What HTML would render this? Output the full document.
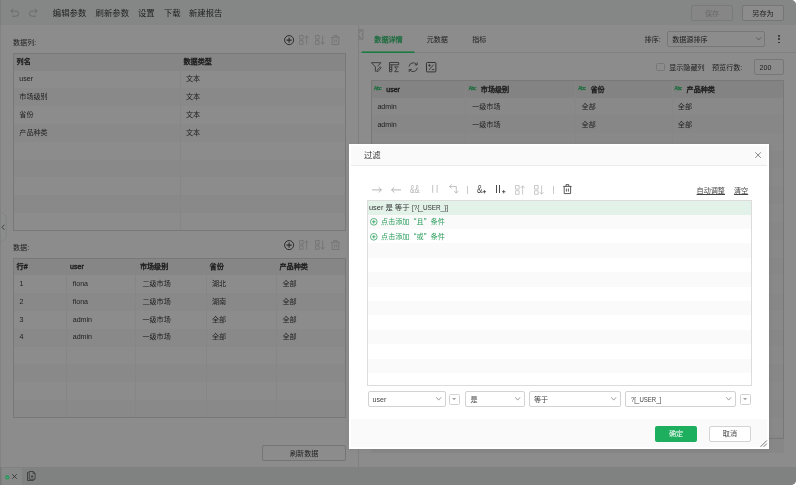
<!DOCTYPE html><html lang="zh-CN"><head><meta charset="utf-8"><title>过滤</title><style>
*{box-sizing:border-box;margin:0;padding:0}
html,body{width:796px;height:485px;overflow:hidden;background:#fff}
body{font-family:"Liberation Sans","Noto Sans CJK SC",sans-serif;font-size:7.1px;color:#1e1e1e;position:relative}
.a{position:absolute}
.t{position:absolute;white-space:nowrap;line-height:10px;height:10px}
.b{font-weight:normal;-webkit-text-stroke:0.4px currentColor}
.f14{font-size:8.4px}
svg{position:absolute;overflow:visible}
.btn{position:absolute;border:1px solid #757575;border-radius:2px;text-align:center;line-height:15.4px;height:15px}
</style></head><body><div class="a" style="left:0;top:0;width:796px;height:485px;border-radius:0 5px 5px 0;overflow:hidden;background:#8c8c8c;will-change:transform">
<div class="a" style="left:0px;top:0px;width:796px;height:25px;background:#858786"></div>
<div class="a" style="left:0px;top:25px;width:796px;height:442px;background:#8c8c8c"></div>
<div class="t f14" style="left:52.8px;top:8.00px;">编辑参数</div>
<div class="t f14" style="left:95.6px;top:8.00px;">刷新参数</div>
<div class="t f14" style="left:138px;top:8.00px;">设置</div>
<div class="t f14" style="left:164px;top:8.00px;">下载</div>
<div class="t f14" style="left:189px;top:8.00px;">新建报告</div>
<svg class="a" style="left:10px;top:7.7px" width="10" height="9" viewBox="0 0 10 9"><path d="M3.2 0.8 L0.8 3 L3.2 5.2 M0.8 3 H6 A2.6 2.6 0 0 1 6 8.2 H2" fill="none" stroke="#696969" stroke-width="0.95"/></svg>
<svg class="a" style="left:28.2px;top:7.7px" width="10" height="9" viewBox="0 0 10 9"><path d="M6.8 0.8 L9.2 3 L6.8 5.2 M9.2 3 H4 A2.6 2.6 0 0 0 4 8.2 H8" fill="none" stroke="#696969" stroke-width="0.95"/></svg>
<div class="btn" style="left:691px;top:5px;width:42px;height:15.6px;line-height:16.4px;color:#6a6a6a;background:#868686;border-color:#7a7a7a">保存</div>
<div class="btn" style="left:742px;top:5px;width:42px;height:15.6px;line-height:16.4px;background:#8c8c8c">另存为</div>
<div class="t " style="left:13px;top:38.00px;">数据列:</div>
<svg style="left:283.9px;top:35.199999999999996px" width="10.2" height="10.2" viewBox="0 0 10.2 10.2"><circle cx="5.1" cy="5.1" r="4.55" fill="none" stroke="#2c2c2c" stroke-width="1"/><path d="M5.1 2.5V7.7M2.5 5.1H7.7" stroke="#2c2c2c" stroke-width="1.1"/></svg>
<svg style="left:298.9px;top:35.4px" width="10" height="10" viewBox="0 0 10 10"><path d="M0.5 0.5h3.6v3.6h-3.6zM0.5 5.7h3.6v3.6h-3.6z M7.6 9.6V0.8 M5.6 2.9 L7.6 0.8 L9.6 2.9" fill="none" stroke="#747474" stroke-width="0.9"/></svg>
<svg style="left:314.7px;top:35.4px" width="10" height="10" viewBox="0 0 10 10"><path d="M0.5 0.5h3.6v3.6h-3.6zM0.5 5.7h3.6v3.6h-3.6z M7.6 0.4V9.2 M5.6 7.1 L7.6 9.2 L9.6 7.1" fill="none" stroke="#747474" stroke-width="0.9"/></svg>
<svg style="left:331.4px;top:35.3px" width="8.9" height="10" viewBox="0 0 8.9 10"><path d="M0.2 2.3H8.7 M2.9 2.3V0.6H6V2.3 M1.1 2.3V9.5H7.8V2.3 M3.5 4.4V7.4 M5.4 4.4V7.4" fill="none" stroke="#747474" stroke-width="0.9"/></svg>
<div class="a" style="left:13px;top:52.8px;width:333px;height:178.0px;background:#8c8c8c"></div>
<div class="a" style="left:13px;top:52.8px;width:333px;height:17.8px;background:#868686"></div>
<div class="a" style="left:13px;top:88.4px;width:333px;height:17.8px;background:#898989"></div>
<div class="a" style="left:13px;top:124.0px;width:333px;height:17.8px;background:#898989"></div>
<div class="a" style="left:13px;top:159.6px;width:333px;height:17.8px;background:#898989"></div>
<div class="a" style="left:13px;top:195.2px;width:333px;height:17.8px;background:#898989"></div>
<div class="a" style="left:180px;top:53.3px;width:0.6px;height:177.0px;background:#868686"></div>
<div class="a" style="left:13px;top:52.8px;width:333px;height:178.0px;border:1px solid #787878"></div>
<div class="t b" style="left:16.6px;top:56.70px;color:#1f1f1f">列名</div>
<div class="t b" style="left:183.5px;top:56.70px;color:#1f1f1f">数据类型</div>
<div class="t " style="left:19.3px;top:74.20px;">user</div>
<div class="t " style="left:186px;top:74.20px;">文本</div>
<div class="t " style="left:19.3px;top:92.00px;">市场级别</div>
<div class="t " style="left:186px;top:92.00px;">文本</div>
<div class="t " style="left:19.3px;top:109.80px;">省份</div>
<div class="t " style="left:186px;top:109.80px;">文本</div>
<div class="t " style="left:19.3px;top:127.60px;">产品种类</div>
<div class="t " style="left:186px;top:127.60px;">文本</div>
<div class="t " style="left:13px;top:242.90px;">数据:</div>
<svg style="left:283.9px;top:239.9px" width="10.2" height="10.2" viewBox="0 0 10.2 10.2"><circle cx="5.1" cy="5.1" r="4.55" fill="none" stroke="#2c2c2c" stroke-width="1"/><path d="M5.1 2.5V7.7M2.5 5.1H7.7" stroke="#2c2c2c" stroke-width="1.1"/></svg>
<svg style="left:298.9px;top:240.1px" width="10" height="10" viewBox="0 0 10 10"><path d="M0.5 0.5h3.6v3.6h-3.6zM0.5 5.7h3.6v3.6h-3.6z M7.6 9.6V0.8 M5.6 2.9 L7.6 0.8 L9.6 2.9" fill="none" stroke="#747474" stroke-width="0.9"/></svg>
<svg style="left:314.7px;top:240.1px" width="10" height="10" viewBox="0 0 10 10"><path d="M0.5 0.5h3.6v3.6h-3.6zM0.5 5.7h3.6v3.6h-3.6z M7.6 0.4V9.2 M5.6 7.1 L7.6 9.2 L9.6 7.1" fill="none" stroke="#747474" stroke-width="0.9"/></svg>
<svg style="left:331.4px;top:240px" width="8.9" height="10" viewBox="0 0 8.9 10"><path d="M0.2 2.3H8.7 M2.9 2.3V0.6H6V2.3 M1.1 2.3V9.5H7.8V2.3 M3.5 4.4V7.4 M5.4 4.4V7.4" fill="none" stroke="#747474" stroke-width="0.9"/></svg>
<div class="a" style="left:13px;top:257.6px;width:333px;height:160.20000000000002px;background:#8c8c8c"></div>
<div class="a" style="left:13px;top:257.6px;width:333px;height:17.8px;background:#868686"></div>
<div class="a" style="left:13px;top:293.2px;width:333px;height:17.8px;background:#898989"></div>
<div class="a" style="left:13px;top:328.8px;width:333px;height:17.8px;background:#898989"></div>
<div class="a" style="left:13px;top:364.4px;width:333px;height:17.8px;background:#898989"></div>
<div class="a" style="left:13px;top:400.0px;width:333px;height:17.8px;background:#898989"></div>
<div class="a" style="left:66.4px;top:258.1px;width:0.6px;height:159.20000000000002px;background:#868686"></div>
<div class="a" style="left:135.3px;top:258.1px;width:0.6px;height:159.20000000000002px;background:#868686"></div>
<div class="a" style="left:206.3px;top:258.1px;width:0.6px;height:159.20000000000002px;background:#868686"></div>
<div class="a" style="left:276.2px;top:258.1px;width:0.6px;height:159.20000000000002px;background:#868686"></div>
<div class="a" style="left:13px;top:257.6px;width:333px;height:160.20000000000002px;border:1px solid #787878"></div>
<div class="t b" style="left:16.6px;top:261.50px;color:#1f1f1f">行#</div>
<div class="t b" style="left:70px;top:261.50px;color:#1f1f1f">user</div>
<div class="t b" style="left:139.9px;top:261.50px;color:#1f1f1f">市场级别</div>
<div class="t b" style="left:209.6px;top:261.50px;color:#1f1f1f">省份</div>
<div class="t b" style="left:279.5px;top:261.50px;color:#1f1f1f">产品种类</div>
<div class="t " style="left:19.6px;top:279.00px;">1</div>
<div class="t " style="left:72.7px;top:279.00px;">fiona</div>
<div class="t " style="left:142.4px;top:279.00px;">二级市场</div>
<div class="t " style="left:212px;top:279.00px;">湖北</div>
<div class="t " style="left:282.5px;top:279.00px;">全部</div>
<div class="t " style="left:19.6px;top:296.80px;">2</div>
<div class="t " style="left:72.7px;top:296.80px;">fiona</div>
<div class="t " style="left:142.4px;top:296.80px;">二级市场</div>
<div class="t " style="left:212px;top:296.80px;">湖南</div>
<div class="t " style="left:282.5px;top:296.80px;">全部</div>
<div class="t " style="left:19.6px;top:314.60px;">3</div>
<div class="t " style="left:72.7px;top:314.60px;">admin</div>
<div class="t " style="left:142.4px;top:314.60px;">一级市场</div>
<div class="t " style="left:212px;top:314.60px;">全部</div>
<div class="t " style="left:282.5px;top:314.60px;">全部</div>
<div class="t " style="left:19.6px;top:332.40px;">4</div>
<div class="t " style="left:72.7px;top:332.40px;">admin</div>
<div class="t " style="left:142.4px;top:332.40px;">一级市场</div>
<div class="t " style="left:212px;top:332.40px;">全部</div>
<div class="t " style="left:282.5px;top:332.40px;">全部</div>
<div class="btn" style="left:262.4px;top:445.3px;width:83.5px;height:15.3px;line-height:16.8px">刷新数据</div>
<svg style="left:0;top:211px" width="8" height="32" viewBox="0 0 8 32"><path d="M0.6 0.3 C1.5 2.2 6.2 3 6.2 5.5 V26.5 C6.2 29 1.5 29.8 0.6 31.7" fill="#8a8d8b" stroke="#7e7e7e" stroke-width="0.6"/><path d="M4.3 13.8 L2 16.3 L4.3 18.8" fill="none" stroke="#3a3a3a" stroke-width="0.9"/></svg>
<div class="a" style="left:358.2px;top:24.5px;width:0.7px;height:442px;background:#808080"></div>
<svg style="left:358.3px;top:28.8px" width="6" height="11" viewBox="0 0 6 11"><rect x="0" y="0" width="5.6" height="10.9" fill="#7d7d7d"/><path d="M3.9 2.9 L1.7 5.45 L3.9 8" fill="none" stroke="#a0a0a0" stroke-width="0.9"/></svg>
<div class="t b" style="left:374.3px;top:34.60px;color:#166a3a;-webkit-text-stroke-width:0.25px">数据详情</div>
<div class="t " style="left:426.7px;top:34.60px;">元数据</div>
<div class="t " style="left:472.2px;top:34.60px;">指标</div>
<div class="a" style="left:359px;top:52px;width:437px;height:0.6px;background:#818181"></div>
<svg style="left:361px;top:50px" width="54" height="4" viewBox="0 0 54 4"><rect x="0.8" y="1.45" width="52.7" height="1.5" fill="#167a3c"/></svg>
<div class="t " style="left:644.6px;top:35.10px;">排序:</div>
<div class="a" style="left:667.2px;top:31.4px;width:97.8px;height:15.6px;border:1px solid #777;border-radius:2px;background:#8c8c8c"></div>
<div class="t " style="left:672.2px;top:35.10px;">数据源排序</div>
<svg style="left:755.6px;top:37.2px" width="5.4" height="3.4" viewBox="0 0 5.4 3.4"><path d="M0.3 0.4 L2.7 2.9 L5.1 0.4" fill="none" stroke="#444" stroke-width="0.7"/></svg>
<div class="a" style="left:778.2px;top:35.099999999999994px;width:1.5px;height:1.5px;background:#2a2a2a;border-radius:1px"></div>
<div class="a" style="left:778.2px;top:38.3px;width:1.5px;height:1.5px;background:#2a2a2a;border-radius:1px"></div>
<div class="a" style="left:778.2px;top:41.5px;width:1.5px;height:1.5px;background:#2a2a2a;border-radius:1px"></div>
<svg style="left:370.8px;top:61.8px" width="10.4" height="10.4" viewBox="0 0 10.4 10.4"><path d="M0.5 0.7H9.9L6.6 4.3 M0.5 0.7L4.4 4.9V9.6" fill="none" stroke="#353535" stroke-width="0.9"/><path d="M9.3 4.7L6.1 8.2L5.8 9.7L7.2 9.3L10.2 5.8Z" fill="none" stroke="#353535" stroke-width="0.8"/></svg>
<svg style="left:389.2px;top:62px" width="10.2" height="10.2" viewBox="0 0 10.2 10.2"><path d="M0.5 0.5H9.7V2.8H0.5Z M0.5 2.8V9.7H2.8V2.8 M0.5 5.2H2.8 M0.5 7.5H2.8" fill="none" stroke="#353535" stroke-width="0.9"/><path d="M9.6 4.9H5.7L7.8 7.3L5.7 9.7H9.6" fill="none" stroke="#353535" stroke-width="0.9"/></svg>
<svg style="left:407.8px;top:61.8px" width="10.4" height="10.4" viewBox="0 0 10.4 10.4"><path d="M1 4.5A4.3 4.3 0 0 1 8.6 2.4 M9.2 0.5V2.9H6.8 M9.4 5.9A4.3 4.3 0 0 1 1.8 8 M1.2 9.9V7.5H3.6" fill="none" stroke="#353535" stroke-width="0.9"/></svg>
<svg style="left:426.3px;top:61.8px" width="10.4" height="10.4" viewBox="0 0 10.4 10.4"><rect x="0.5" y="0.5" width="9.4" height="9.4" rx="0.8" fill="none" stroke="#353535" stroke-width="1"/><path d="M2.2 3.4H4.8 M3.5 2.1V4.7 M7.6 2.6L3 8 M5.9 7.6H8.4" fill="none" stroke="#353535" stroke-width="0.85"/></svg>
<div class="a" style="left:656.2px;top:62.6px;width:8.6px;height:8.6px;border:1px solid #777;border-radius:1.5px;background:#8c8c8c"></div>
<div class="t " style="left:669.2px;top:62.80px;">显示隐藏列</div>
<div class="t " style="left:712px;top:62.80px;">预览行数:</div>
<div class="a" style="left:754px;top:59.4px;width:29.7px;height:15.6px;border:1px solid #777;border-radius:2px;background:#8c8c8c"></div>
<div class="t " style="left:759.5px;top:62.80px;">200</div>
<div class="a" style="left:371px;top:80px;width:412.7px;height:359px;background:#898989"></div>
<div class="a" style="left:371px;top:80px;width:412.7px;height:17.5px;background:#838383"></div>
<div class="a" style="left:371px;top:115.0px;width:412.7px;height:17.8px;background:#878787"></div>
<div class="a" style="left:371px;top:150.6px;width:412.7px;height:17.8px;background:#878787"></div>
<div class="a" style="left:371px;top:186.2px;width:412.7px;height:17.8px;background:#878787"></div>
<div class="a" style="left:371px;top:221.8px;width:412.7px;height:17.8px;background:#878787"></div>
<div class="a" style="left:371px;top:257.4px;width:412.7px;height:17.8px;background:#878787"></div>
<div class="a" style="left:371px;top:293.0px;width:412.7px;height:17.8px;background:#878787"></div>
<div class="a" style="left:371px;top:328.6px;width:412.7px;height:17.8px;background:#878787"></div>
<div class="a" style="left:371px;top:364.2px;width:412.7px;height:17.8px;background:#878787"></div>
<div class="a" style="left:371px;top:399.8px;width:412.7px;height:17.8px;background:#878787"></div>
<div class="a" style="left:371px;top:435.4px;width:412.7px;height:17.8px;background:#878787"></div>
<div class="a" style="left:465.4px;top:80.5px;width:0.6px;height:358px;background:#868686"></div>
<div class="a" style="left:575.3px;top:80.5px;width:0.6px;height:358px;background:#868686"></div>
<div class="a" style="left:671.5px;top:80.5px;width:0.6px;height:358px;background:#868686"></div>
<div class="a" style="left:371px;top:80px;width:412.7px;height:359px;border:1px solid #787878"></div>
<div class="t b" style="left:374.10px;top:83.50px;font-size:4.7px;color:#156c38;letter-spacing:-0.25px;-webkit-text-stroke-width:0.25px;margin-top:0.5px">Abc</div>
<div class="t b" style="left:386.2px;top:85.00px;color:#1f1f1f">user</div>
<div class="t b" style="left:468.70px;top:83.50px;font-size:4.7px;color:#156c38;letter-spacing:-0.25px;-webkit-text-stroke-width:0.25px;margin-top:0.5px">Abc</div>
<div class="t b" style="left:480.8px;top:85.00px;color:#1f1f1f">市场级别</div>
<div class="t b" style="left:578.30px;top:83.50px;font-size:4.7px;color:#156c38;letter-spacing:-0.25px;-webkit-text-stroke-width:0.25px;margin-top:0.5px">Abc</div>
<div class="t b" style="left:590.4px;top:85.00px;color:#1f1f1f">省份</div>
<div class="t b" style="left:674.50px;top:83.50px;font-size:4.7px;color:#156c38;letter-spacing:-0.25px;-webkit-text-stroke-width:0.25px;margin-top:0.5px">Abc</div>
<div class="t b" style="left:686.6px;top:85.00px;color:#1f1f1f">产品种类</div>
<div class="t " style="left:377.4px;top:102.10px;">admin</div>
<div class="t " style="left:472.2px;top:102.10px;">一级市场</div>
<div class="t " style="left:581.6px;top:102.10px;">全部</div>
<div class="t " style="left:677.8px;top:102.10px;">全部</div>
<div class="t " style="left:377.4px;top:119.90px;">admin</div>
<div class="t " style="left:472.2px;top:119.90px;">一级市场</div>
<div class="t " style="left:581.6px;top:119.90px;">全部</div>
<div class="t " style="left:677.8px;top:119.90px;">全部</div>
<div class="a" style="left:0px;top:466.6px;width:796px;height:18.4px;background:#808281"></div>
<div class="a" style="left:2px;top:468px;width:19.8px;height:17px;background:#868988;border-radius:0 0 0 2px"></div>
<svg style="left:5px;top:475.2px" width="4.6" height="4.8" viewBox="0 0 4.6 4.8"><circle cx="2.3" cy="2.4" r="2.15" fill="#2b955c"/><path d="M1.2 2.5H3.4" stroke="#6fbf96" stroke-width="0.6"/></svg>
<svg style="left:12px;top:474.2px" width="5" height="5" viewBox="0 0 5 5"><path d="M0.3 0.3L4.7 4.7M4.7 0.3L0.3 4.7" stroke="#2c2c2c" stroke-width="0.8"/></svg>
<svg style="left:27px;top:471px" width="8.6" height="10" viewBox="0 0 8.6 10"><path d="M1.6 1.4H0.5V9.5H6.4V8.4 M2.2 0.5H6.2L8.1 2.4V8.2H2.2Z M6.1 0.6V2.5H8 M3.8 5.4H6.4 M5.1 4.1V6.7" fill="none" stroke="#333" stroke-width="0.8"/></svg>
<div class="a" style="left:349px;top:144.4px;width:420px;height:304.5px;background:#fff;box-shadow:0 1px 5px rgba(0,0,0,0.05);color:#3d3d3d">
<div class="a" style="left:1.6px;top:1.6px;width:416.8px;height:20px;background:#fafafa;border-bottom:1px solid #ebebeb"></div>
<div class="t f14" style="left:15px;top:5.90px;color:#333">过滤</div>
<svg style="left:406.00px;top:7.80px" width="6.2" height="6.2" viewBox="0 0 6.2 6.2"><path d="M0.3 0.3L5.9 5.9M5.9 0.3L0.3 5.9" stroke="#555" stroke-width="0.7"/></svg>
<svg style="left:23.00px;top:42.50px" width="10" height="5.8" viewBox="0 0 10 5.8"><path d="M0 2.9H9.4 M6.7 0.3L9.4 2.9L6.7 5.5" fill="none" stroke="#a8a8a8" stroke-width="0.85"/></svg>
<svg style="left:41.80px;top:42.50px" width="10" height="5.8" viewBox="0 0 10 5.8"><path d="M10 2.9H0.6 M3.3 0.3L0.6 2.9L3.3 5.5" fill="none" stroke="#a8a8a8" stroke-width="0.85"/></svg>
<svg style="left:61.40px;top:41.00px" width="10" height="8" viewBox="0 0 10 8"><text x="0" y="7.6" font-size="10.6" fill="#b8b8b8" textLength="9.7" lengthAdjust="spacingAndGlyphs" font-family="Liberation Sans, sans-serif">&amp;&amp;</text></svg>
<svg style="left:82.60px;top:41.00px" width="6" height="8" viewBox="0 0 6 8"><path d="M0.7 0V7.8M5.1 0V7.8" stroke="#b8b8b8" stroke-width="0.85"/></svg>
<svg style="left:99.60px;top:39.80px" width="10.2" height="10.2" viewBox="0 0 10.2 10.2"><path d="M0.6 2.5H7.3V9.2 M2.7 0.4L0.6 2.5L2.7 4.6 M5.2 7.1L7.3 9.2L9.4 7.1" fill="none" stroke="#b8b8b8" stroke-width="0.85"/></svg>
<div class="a" style="left:118.2px;top:41.6px;width:0.7px;height:7.6px;background:#c8c8c8"></div>
<svg style="left:128.00px;top:40.80px" width="10" height="9" viewBox="0 0 10 9"><text x="0" y="7.6" font-size="10.4" fill="#4a4a4a" textLength="5.6" lengthAdjust="spacingAndGlyphs" font-family="Liberation Sans, sans-serif">&amp;</text><path d="M7.4 5V8.4M5.7 6.7H9.1" stroke="#4a4a4a" stroke-width="0.9"/></svg>
<div class="a" style="left:147.1px;top:41.1px;width:0.9px;height:7.7px;background:#4a4a4a"></div>
<div class="a" style="left:150px;top:41.1px;width:0.9px;height:7.7px;background:#4a4a4a"></div>
<svg style="left:152.60px;top:45.40px" width="3.4" height="3.4" viewBox="0 0 3.4 3.4"><path d="M1.7 0V3.4M0 1.7H3.4" stroke="#4a4a4a" stroke-width="0.9"/></svg>
<svg style="left:166.00px;top:40.30px" width="10" height="10" viewBox="0 0 10 10"><path d="M0.5 0.5h3.6v3.6h-3.6zM0.5 5.7h3.6v3.6h-3.6z M7.6 9.6V0.8 M5.6 2.9 L7.6 0.8 L9.6 2.9" fill="none" stroke="#b8b8b8" stroke-width="0.75"/></svg>
<svg style="left:185.00px;top:40.30px" width="10" height="10" viewBox="0 0 10 10"><path d="M0.5 0.5h3.6v3.6h-3.6zM0.5 5.7h3.6v3.6h-3.6z M7.6 0.4V9.2 M5.6 7.1 L7.6 9.2 L9.6 7.1" fill="none" stroke="#b8b8b8" stroke-width="0.75"/></svg>
<div class="a" style="left:204px;top:41.6px;width:0.7px;height:7.6px;background:#c8c8c8"></div>
<svg style="left:214.00px;top:40.10px" width="8.8" height="10.2" viewBox="0 0 8.8 10.2"><path d="M0.2 2.4H8.6 M3 2.4V0.6H5.8V2.4 M1.2 2.4V9.6H7.6V2.4 M3.4 4.6V7.6 M5.4 4.6V7.6" fill="none" stroke="#4a4a4a" stroke-width="0.9"/></svg>
<div class="t " style="left:347.6px;top:41.40px;text-decoration:underline;text-underline-offset:1px;color:#444">自动调整</div>
<div class="t " style="left:385px;top:41.40px;text-decoration:underline;text-underline-offset:1px;color:#444">清空</div>
<div class="a" style="left:18.5px;top:56.1px;width:383.7px;height:14.700000000000001px;background:#e2f2e8"></div>
<div class="a" style="left:18.6px;top:70.3px;width:383.5px;height:14.4px;background:#fafafa"></div>
<div class="a" style="left:18.6px;top:99.1px;width:383.5px;height:14.4px;background:#fafafa"></div>
<div class="a" style="left:18.6px;top:127.9px;width:383.5px;height:14.4px;background:#fafafa"></div>
<div class="a" style="left:18.6px;top:156.7px;width:383.5px;height:14.4px;background:#fafafa"></div>
<div class="a" style="left:18.6px;top:185.5px;width:383.5px;height:14.4px;background:#fafafa"></div>
<div class="a" style="left:18.6px;top:214.3px;width:383.5px;height:14.4px;background:#fafafa"></div>
<div class="a" style="left:18px;top:55.6px;width:384.7px;height:186px;border:1px solid #dcdcdc"></div>
<div class="t " style="left:20px;top:58.40px;font-size:7.4px;color:#333">user 是 等于 <span style="display:inline-block;transform:scaleX(0.86);transform-origin:0 50%">[?{_USER_}]</span></div>
<svg style="left:21.30px;top:74.10px" width="7.6" height="7.6" viewBox="0 0 7.6 7.6"><circle cx="3.8" cy="3.8" r="3.35" fill="none" stroke="#2a9d5c" stroke-width="0.75"/><path d="M3.8 2V5.6M2 3.8H5.6" stroke="#2a9d5c" stroke-width="0.8"/></svg>
<div class="t " style="left:32.1px;top:72.10px;color:#2a9d5c">点击添加<span style="font-family:&quot;Noto Sans CJK SC&quot;,sans-serif">“</span>且<span style="font-family:&quot;Noto Sans CJK SC&quot;,sans-serif">”</span>条件</div>
<svg style="left:21.30px;top:88.30px" width="7.6" height="7.6" viewBox="0 0 7.6 7.6"><circle cx="3.8" cy="3.8" r="3.35" fill="none" stroke="#2a9d5c" stroke-width="0.75"/><path d="M3.8 2V5.6M2 3.8H5.6" stroke="#2a9d5c" stroke-width="0.8"/></svg>
<div class="t " style="left:32.1px;top:86.30px;color:#2a9d5c">点击添加<span style="font-family:&quot;Noto Sans CJK SC&quot;,sans-serif">“</span>或<span style="font-family:&quot;Noto Sans CJK SC&quot;,sans-serif">”</span>条件</div>
<div class="a" style="left:18.8px;top:247.0px;width:78.2px;height:15.6px;border:1px solid #d2d2d2;border-radius:2px;background:#fff"></div>
<div class="t " style="left:23.6px;top:250.60px;color:#444;transform:scaleX(1);transform-origin:0 50%">user</div>
<svg style="left:87.00px;top:252.70px" width="5.4" height="3.6" viewBox="0 0 5.4 3.6"><path d="M0.3 0.3L2.7 3.1L5.1 0.3" fill="none" stroke="#888" stroke-width="0.8"/></svg>
<div class="a" style="left:100px;top:249.2px;width:11px;height:11.4px;border:1px solid #d2d2d2;border-radius:1.5px;background:#fff"></div>
<svg style="left:103.40px;top:253.70px" width="4.2" height="2.2" viewBox="0 0 4.2 2.2"><path d="M0 0H4.2L2.1 2.2Z" fill="#a2a2a2"/></svg>
<div class="a" style="left:116.4px;top:247.0px;width:59.5px;height:15.6px;border:1px solid #d2d2d2;border-radius:2px;background:#fff"></div>
<div class="t " style="left:121.4px;top:250.60px;color:#444;transform:scaleX(1);transform-origin:0 50%">是</div>
<svg style="left:165.90px;top:252.70px" width="5.4" height="3.6" viewBox="0 0 5.4 3.6"><path d="M0.3 0.3L2.7 3.1L5.1 0.3" fill="none" stroke="#888" stroke-width="0.8"/></svg>
<div class="a" style="left:180.4px;top:247.0px;width:91.3px;height:15.6px;border:1px solid #d2d2d2;border-radius:2px;background:#fff"></div>
<div class="t " style="left:185px;top:250.60px;color:#444;transform:scaleX(1);transform-origin:0 50%">等于</div>
<svg style="left:261.70px;top:252.70px" width="5.4" height="3.6" viewBox="0 0 5.4 3.6"><path d="M0.3 0.3L2.7 3.1L5.1 0.3" fill="none" stroke="#888" stroke-width="0.8"/></svg>
<div class="a" style="left:276.4px;top:247.0px;width:111px;height:15.6px;border:1px solid #d2d2d2;border-radius:2px;background:#fff"></div>
<div class="t " style="left:281.5px;top:250.60px;color:#444;transform:scaleX(0.85);transform-origin:0 50%">?[_USER_]</div>
<svg style="left:377.40px;top:252.70px" width="5.4" height="3.6" viewBox="0 0 5.4 3.6"><path d="M0.3 0.3L2.7 3.1L5.1 0.3" fill="none" stroke="#888" stroke-width="0.8"/></svg>
<div class="a" style="left:391px;top:249.2px;width:11px;height:11.4px;border:1px solid #d2d2d2;border-radius:1.5px;background:#fff"></div>
<svg style="left:394.40px;top:253.70px" width="4.2" height="2.2" viewBox="0 0 4.2 2.2"><path d="M0 0H4.2L2.1 2.2Z" fill="#a2a2a2"/></svg>
<div class="a" style="left:1.6px;top:274.4px;width:416.8px;height:28.4px;background:#fafafa"></div>
<div class="btn" style="left:306.10px;top:281.70px;width:41.8px;height:15.6px;line-height:17.6px;border:none;background:#1dae5e;color:#fff">确定</div>
<div class="btn" style="left:360.00px;top:281.70px;width:41.8px;height:15.6px;line-height:15.6px;border:1px solid #d4d4d4;background:#fff;color:#444">取消</div>
<svg style="left:411.00px;top:296.10px" width="7" height="7" viewBox="0 0 7 7"><path d="M0.5 6.8L6.8 0.5M3.6 6.8L6.8 3.6" stroke="#6a6a6a" stroke-width="0.9"/></svg>
</div>
<div class="a" style="left:0px;top:0px;width:1px;height:485px;background:rgba(0,0,0,0.07)"></div>
</div></body></html>
